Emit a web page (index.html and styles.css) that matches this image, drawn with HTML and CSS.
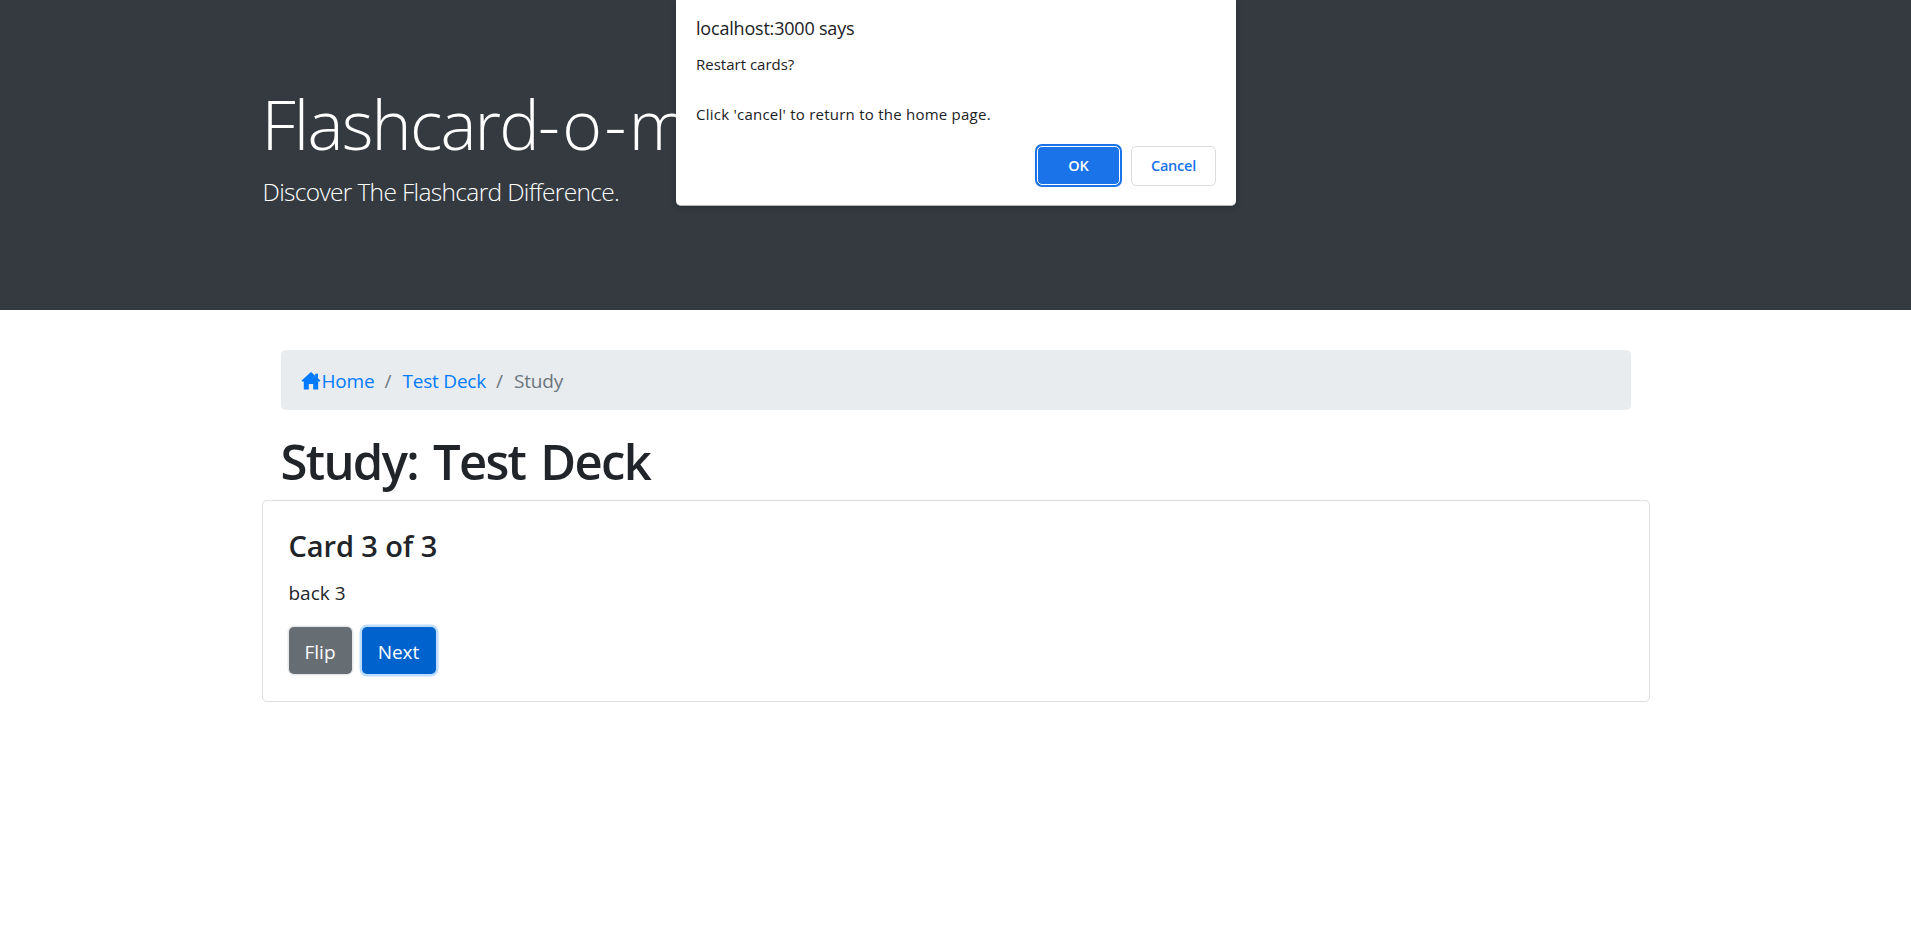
FILE: index.html
```html
<!DOCTYPE html>
<html lang="en">
<head>
<meta charset="utf-8">
<title>Flashcards</title>
<link rel="stylesheet" href="styles.css">
</head>
<body>
<header class="jumbotron">
  <div class="container">
    <h1 class="display">Flashcard<span class="wide">-o-</span>m</h1>
    <p class="lead">Discover The Flashcard Difference.</p>
  </div>
</header>
<main class="container">
  <div class="inset">
    <nav class="breadcrumb">
      <a class="home" href="#"><svg class="icon" viewBox="0 0 20 20"><path d="M10 1 19.4 9.6 18.8 10.4H17.2V18.6H12.2V13H7.8V18.6H2.8V10.4H1.2L.6 9.6Z"/><path d="M14.2 2.8H17V7.6L14.2 5Z"/></svg><span>Home</span></a>
      <span class="slash">/</span>
      <a class="deck" href="#">Test Deck</a>
      <span class="slash">/</span>
      <span class="current">Study</span>
    </nav>
    <h2 class="heading">Study: Test Deck</h2>
  </div>
  <section class="card">
    <h4 class="card-title">Card 3 of 3</h4>
    <p class="card-text">back 3</p>
    <div class="actions">
      <button class="btn flip">Flip</button>
      <button class="btn next">Next</button>
    </div>
  </section>
</main>
<div class="dialog" role="dialog">
  <div class="dialog-title"><span>localhost:3000 says</span></div>
  <div class="dialog-line">Restart cards?</div>
  <div class="dialog-line spaced">Click 'cancel' to return to the home page.</div>
  <div class="dialog-actions">
    <button class="dialog-btn ok">OK</button>
    <button class="dialog-btn cancel">Cancel</button>
  </div>
</div>
</body>
</html>
```
FILE: styles.css
```css
* { box-sizing: border-box; }
body {
  margin: 0;
  height: 933px;
  overflow: hidden;
  background: #fff;
  color: #212529;
  font-family: "Segoe UI", "Open Sans", "Noto Sans", sans-serif;
  font-size: 19px;
  line-height: 30px;
}
h1, h2, h4, p { margin: 0; white-space: nowrap; }
a { color: #007bff; text-decoration: none; }
button { font-family: inherit; }
.container { width: 1388px; margin: 0 auto; }
.jumbotron {
  height: 310px;
  padding-top: 82px;
  margin-bottom: 40px;
  background: #343a40;
  color: #fff;
}
.display { font-size: 68px; font-weight: 300; line-height: 84px; letter-spacing: -1.8px; margin-bottom: 7px; }
.wide { letter-spacing: 2.4px; }
.lead { font-size: 24.5px; font-weight: 300; line-height: 37px; letter-spacing: -0.66px; padding-left: 1px; }
.inset { padding: 0 19px; }
.breadcrumb {
  display: flex;
  align-items: center;
  height: 60px;
  padding: 2px 20px 0;
  background: #e9ecef;
  border-radius: 5px;
  letter-spacing: -0.2px;
  white-space: nowrap;
}
.home { display: flex; align-items: center; }
.icon { width: 20px; height: 20px; fill: #007bff; flex: none; margin: -1px 1px 0 0; }
.slash { width: 28px; padding-left: 10px; color: #6c757d; }
.current { color: #6c757d; }
.heading { font-size: 49px; font-weight: 600; line-height: 60px; padding-top: 1px; margin: 20px 0 9px; letter-spacing: -1.7px; word-spacing: 4px; }
.card { height: 202px; padding: 27px 26px; border: 1px solid #dfdfdf; border-radius: 5px; }
.card-title { font-size: 29px; font-weight: 600; line-height: 36px; letter-spacing: -0.1px; margin-bottom: 14px; }
.card-text { margin-bottom: 19px; letter-spacing: 0; }
.actions { display: flex; gap: 10px; }
.btn { height: 47px; border: 0; border-radius: 5px; padding: 3px 0 0; color: #fff; font-size: 19px; }
.flip { width: 63px; background: #666d73; box-shadow: 0 0 0 1.5px #e6e8ea; }
.next { width: 74px; background: #0062cc; box-shadow: 0 0 0 2.5px #bfdeff; }
.dialog {
  position: absolute;
  top: 0;
  left: 676px;
  width: 560px;
  height: 206px;
  padding: 13px 20px 0;
  background: #fff;
  border-bottom: 1px solid #b5b7b9;
  border-radius: 0 0 5px 5px;
  box-shadow: 0 2px 6px rgba(0, 0, 0, .2);
  color: #202124;
  white-space: nowrap;
}
.dialog-title { font-size: 18px; line-height: 30px; letter-spacing: -0.2px; }
.dialog-line { font-size: 15px; line-height: 25px; margin-top: 9px; letter-spacing: 0; }
.spaced { margin-top: 25px; letter-spacing: 0.24px; }
.dialog-actions { display: flex; justify-content: flex-end; gap: 11px; margin-top: 19px; }
.dialog-btn { width: 85px; height: 40px; border-radius: 5px; padding: 0 0 1px; font-size: 14.5px; font-weight: 600; letter-spacing: -0.2px; }
.ok { width: 83px; height: 39px; border: 1px solid #fff; background: #1a73e8; color: #fff; box-shadow: 0 0 0 2px #1a73e8; }
.cancel { border: 1px solid #dadce0; background: #fff; color: #1a73e8; }
```
